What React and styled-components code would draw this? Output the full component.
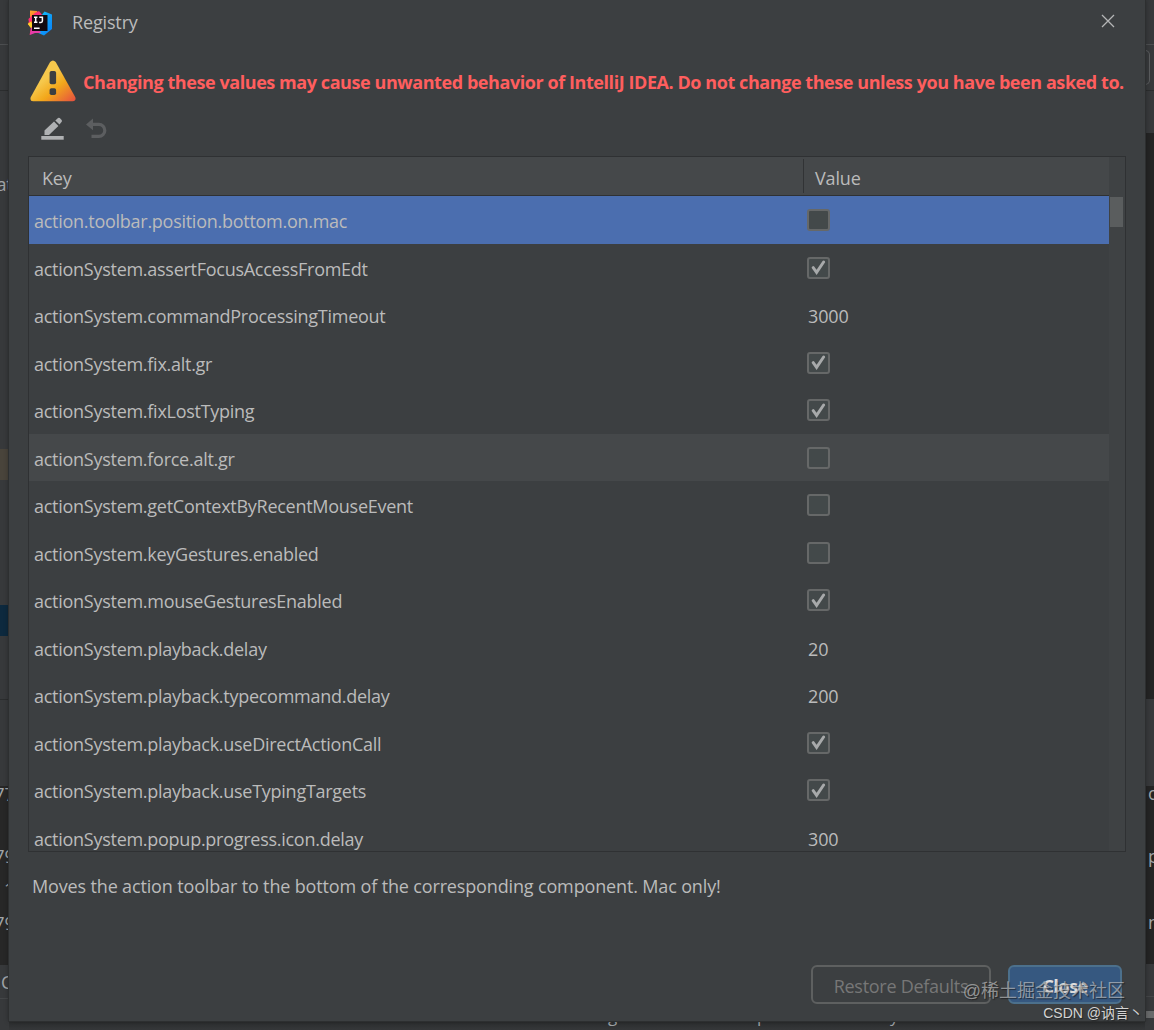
import React, { useState } from "react"
import styled, { createGlobalStyle, css } from "styled-components"

const GlobalStyle = createGlobalStyle`
  * {
    box-sizing: border-box;
  }
  body {
    margin: 0;
    background: #323436;
    font-family: "Open Sans", "Noto Sans", "Noto Sans CJK SC", sans-serif;
    font-size: 18px;
    letter-spacing: -0.15px;
    color: #bbbbbb;
  }
`

const Screen = styled.div`
  position: relative;
  display: grid;
  grid-template-columns: 9px 1136px 9px;
  grid-template-rows: 1021px 9px;
  width: 1154px;
  height: 1030px;
  overflow: hidden;
`

// slices of the editor window that stay visible around the dialog
const Edge = styled.div`
  display: flex;
  flex-direction: column;
  grid-row: 1 / 3;
  overflow: hidden;
  background: #343638;
`

const Strip = styled.div`
  flex: none;
  display: flex;
  align-items: center;
  justify-content: ${p => (p.$center ? "center" : "flex-start")};
  height: ${p => p.$h}px;
  padding-left: ${p => p.$pad || 0}px;
  overflow: hidden;
  white-space: nowrap;
  line-height: 20px;
  color: #a0a4a8;
  background: ${p => p.$bg || "#37393b"};
  ${p =>
    p.$line &&
    css`
      border-bottom: 1px solid ${p.$line};
    `}
`

const FieldEnd = styled.div`
  width: 5px;
  height: 35px;
  border: 1px solid #5a5c5e;
  border-left: 0;
  border-radius: 0 5px 5px 0;
`

const StatusSlice = styled.div`
  grid-column: 2;
  grid-row: 2;
  display: flex;
  align-items: flex-end;
  height: 9px;
  padding-left: 599px;
  overflow: hidden;
  line-height: 19px;
  font-size: 17px;
  color: #a0a4a8;
  background: linear-gradient(#2b2d2e, #353739);
`

const StatusGlyph = styled.span`
  width: ${p => p.$w}px;
  height: 24px;
`

const Dialog = styled.section`
  grid-column: 2;
  grid-row: 1;
  display: flex;
  flex-direction: column;
  background: #3c3f41;
  box-shadow: 0 0 0 1px #2d2f30, 0 0 5px rgba(0, 0, 0, 0.4);
  z-index: 1;
`

const TitleBar = styled.header`
  display: flex;
  align-items: center;
  height: 45px;
  padding: 0 30px 0 18px;
`

const Title = styled.h1`
  flex: 1;
  margin: 0 0 1px 19px;
  font-size: 18px;
  font-weight: 400;
  line-height: 24px;
`

const PlainButton = styled.button`
  display: flex;
  padding: 0;
  border: 0;
  margin-bottom: ${p => p.$lift || 0}px;
  background: none;
`

const Warning = styled.div`
  display: flex;
  align-items: center;
  height: 64px;
  padding: 8px 0 0 20px;
  gap: 6px;
  font-weight: 700;
  letter-spacing: -0.43px;
  color: #ff5e5e;
  white-space: nowrap;

  svg {
    flex: none;
  }
  span {
    padding-top: 2px;
  }
`

const Toolbar = styled.div`
  display: flex;
  align-items: center;
  height: 47px;
  padding: 0 0 8px 32px;
  gap: 21px;
`

const Table = styled.div`
  display: grid;
  grid-template-columns: 1080px 16px;
  width: 1098px;
  height: 696px;
  margin-left: 19px;
  border: 1px solid #2f3133;
`

const TableMain = styled.div`
  height: 694px;
  overflow: hidden;
`

const TableHead = styled.div`
  display: flex;
  height: 39px;
  border-bottom: 1px solid #2f3133;
  background: #45484a;
`

const HeadCell = styled.div`
  display: flex;
  align-items: center;
  width: ${p => p.$w}px;
  height: 34px;
  margin-top: 2px;
  padding: 3px 0 0 ${p => p.$pad}px;
  ${p =>
    p.$divider &&
    css`
      border-right: 1px solid #313335;
    `}
`

const Row = styled.div`
  display: flex;
  align-items: center;
  height: 47.5px;
  background: ${p =>
    p.$selected ? "#4b6eaf" : p.$hovered ? "#45484a" : "transparent"};
`

const KeyCell = styled.div`
  width: 774px;
  padding: 3px 0 0 5px;
  letter-spacing: -0.27px;
`

const ValueCell = styled.div`
  padding: ${p => (p.$text ? "3px 0 0 5px" : "1px 0 0 4px")};
`

const Check = styled.span`
  display: flex;
  align-items: center;
  justify-content: center;
  width: 23px;
  height: 22px;
  border: 2px solid #666868;
  border-radius: 3px;
  background: #43494a;
`

const ScrollTrack = styled.div`
  padding: 40px 2px 0 1px;
  background: #3f4244;
`

const ScrollThumb = styled.div`
  height: 30px;
  background: #5a5d5e;
`

const Description = styled.p`
  height: 113px;
  margin: 0;
  padding: 21px 0 0 23px;
  line-height: 26px;
`

const Footer = styled.footer`
  display: flex;
  justify-content: flex-end;
  gap: 17px;
  padding-right: 23px;
`

const Button = styled.button`
  width: ${p => p.$w}px;
  height: 39px;
  padding: 3px 0 0;
  border: 2px solid ${p => (p.$primary ? "#4c708c" : "#5e6060")};
  border-radius: 6px;
  font: inherit;
  font-weight: ${p => (p.$primary ? 700 : 400)};
  letter-spacing: ${p => (p.$primary ? "-0.5px" : "-0.27px")};
  line-height: 24px;
  color: ${p => (p.$primary ? "#dddddd" : "#777777")};
  background: ${p => (p.$primary ? "#365880" : "transparent")};
`

const Watermark = styled.div`
  position: absolute;
  right: ${p => p.$right}px;
  bottom: ${p => p.$bottom}px;
  z-index: 2;
  font-family: "Liberation Sans", "Noto Sans CJK SC", sans-serif;
  font-size: ${p => p.$size}px;
  letter-spacing: 0;
  line-height: 20px;
  white-space: nowrap;
  color: ${p => p.$color};
  text-shadow: 1px 1px 1px rgba(20, 20, 20, 0.6);
`

const IdeaLogo = () => (
  <svg width="26" height="26" viewBox="0 0 26 26">
    <defs>
      <linearGradient id="ideaLeft" x1="0" y1="0" x2="0.4" y2="1">
        <stop offset="0" stopColor="#fdb32b" />
        <stop offset="0.5" stopColor="#fc6b2d" />
        <stop offset="1" stopColor="#e92b8d" />
      </linearGradient>
      <linearGradient id="ideaRight" x1="0" y1="0" x2="1" y2="1">
        <stop offset="0" stopColor="#16c8f5" />
        <stop offset="1" stopColor="#087cfa" />
      </linearGradient>
    </defs>
    <path d="M3 0.5 10 1 14 8 9 20 2.5 25 4 18 0.8 14 3 10Z" fill="url(#ideaLeft)" />
    <path d="M8 3 12 1 16 6 6 10 2 13 1.4 9Z" fill="#fe2e75" />
    <path d="M14 6 17.5 1.5 25 4.5 25 19 17 25.5 9 22 17 12Z" fill="url(#ideaRight)" />
    <path d="M3 25 4 18 11 18 14 23 8 23Z" fill="#e73ba8" />
    <path d="M0.8 14 4 11.5 6 16 4 18Z" fill="#fdd22b" />
    <rect x="5" y="5" width="15.5" height="16" fill="#120a10" />
    <path
      d="M7 7.2H10.4M8.7 7.2V12.3M7 12.3H10.4M12.3 7.2H15.4V11Q15.4 12.4 14 12.4H12.1M7 18.2H12.6"
      fill="none"
      stroke="#fff"
      strokeWidth="1.5"
    />
  </svg>
)

const WarningIcon = () => (
  <svg width="48" height="42" viewBox="0 0 48 42">
    <defs>
      <linearGradient id="warn" x1="0.2" y1="0.2" x2="0.95" y2="1">
        <stop offset="0.25" stopColor="#f6c84c" />
        <stop offset="0.55" stopColor="#f3a81b" />
        <stop offset="1" stopColor="#e6533e" />
      </linearGradient>
    </defs>
    <path
      d="M21.1 2Q24 -1.2 26.7 2L46.3 37.3Q47.4 41 43.7 41.3H4Q0.6 41 1.7 37.3Z"
      fill="url(#warn)"
    />
    <rect x="20.6" y="11" width="6.5" height="13.2" rx="1.8" fill="#3c3f41" />
    <rect x="20.6" y="28.3" width="6.5" height="6.8" rx="1.8" fill="#3c3f41" />
  </svg>
)

const EditIcon = () => (
  <svg width="24" height="24" viewBox="0 0 24 24" fill="#afb1b3">
    <path d="M3.5 13.6 13 4.6 17.4 9 8 18H3.5Z" />
    <path d="M14.3 3.4 17 0.9Q17.9 0.3 18.8 1.1L20.6 2.9Q21.4 3.8 20.7 4.7L18.5 7.4Z" />
    <rect x="0.3" y="19" width="22.4" height="3.7" />
  </svg>
)

const UndoIcon = () => (
  <svg width="22" height="22" viewBox="0 0 22 22">
    <path d="M0 6.6 7 0.5V12.3Z" fill="#5c5e60" />
    <path
      d="M6 6.4H12.8A6 6 0 0 1 12.8 18.4H5.5"
      fill="none"
      stroke="#5c5e60"
      strokeWidth="3.2"
    />
  </svg>
)

const CloseIcon = () => (
  <svg width="14" height="14" viewBox="0 0 14 14">
    <path d="M1 1 13 13M13 1 1 13" stroke="#b5b6b7" strokeWidth="1.3" />
  </svg>
)

const CheckMark = () => (
  <svg width="15" height="15" viewBox="0 0 15 15">
    <path
      d="M2.2 7.6 5.6 12.4 12.6 2"
      fill="none"
      stroke="#a7a9aa"
      strokeWidth="2.9"
      strokeLinecap="round"
    />
  </svg>
)

const entries = [
  ["action.toolbar.position.bottom.on.mac", false],
  ["actionSystem.assertFocusAccessFromEdt", true],
  ["actionSystem.commandProcessingTimeout", "3000"],
  ["actionSystem.fix.alt.gr", true],
  ["actionSystem.fixLostTyping", true],
  ["actionSystem.force.alt.gr", false],
  ["actionSystem.getContextByRecentMouseEvent", false],
  ["actionSystem.keyGestures.enabled", false],
  ["actionSystem.mouseGesturesEnabled", true],
  ["actionSystem.playback.delay", "20"],
  ["actionSystem.playback.typecommand.delay", "200"],
  ["actionSystem.playback.useDirectActionCall", true],
  ["actionSystem.playback.useTypingTargets", true],
  ["actionSystem.popup.progress.icon.delay", "300"],
]

const RegistryTable = () => {
  const [selected, setSelected] = useState(0)

  return (
    <Table>
      <TableMain>
        <TableHead>
          <HeadCell $w={775} $pad={13} $divider>
            Key
          </HeadCell>
          <HeadCell $w={305} $pad={11}>
            Value
          </HeadCell>
        </TableHead>
        {entries.map(([name, value], i) => (
          <Row
            key={name}
            $selected={i === selected}
            $hovered={i === 5}
            onClick={() => setSelected(i)}
          >
            <KeyCell>{name}</KeyCell>
            <ValueCell $text={typeof value === "string"}>
              {typeof value === "string" ? (
                value
              ) : (
                <Check>{value && <CheckMark />}</Check>
              )}
            </ValueCell>
          </Row>
        ))}
      </TableMain>
      <ScrollTrack>
        <ScrollThumb />
      </ScrollTrack>
    </Table>
  )
}

const LeftEdge = () => (
  <Edge>
    <Strip $h={45} $line="#4c4e50" />
    <Strip $h={46} $line="#2b2d2e" />
    <Strip $h={186} $center>
      at
    </Strip>
    <Strip $h={172} />
    <Strip $h={31} $bg="#49443b" />
    <Strip $h={125} />
    <Strip $h={31} $bg="#0d293e" />
    <Strip $h={64} $line="#2b2d2e" />
    <Strip $h={86} />
    <Strip $h={16} $bg="#272727" $center>
      77
    </Strip>
    <Strip $h={44} $bg="#272727" />
    <Strip $h={20} $bg="#272727" $center>
      79
    </Strip>
    <Strip $h={13} $bg="#272727" />
    <Strip $h={20} $bg="#272727" $pad={4}>
      1
    </Strip>
    <Strip $h={14} $bg="#272727" />
    <Strip $h={20} $bg="#272727" $center>
      79
    </Strip>
    <Strip $h={32} $bg="#272727" />
    <Strip $h={34} $line="#444648" $pad={1}>
      C
    </Strip>
    <Strip $h={31} />
  </Edge>
)

const RightEdge = () => (
  <Edge>
    <Strip $h={45} $line="#4c4e50" />
    <Strip $h={46} $line="#2b2d2e">
      <FieldEnd />
    </Strip>
    <Strip $h={42} />
    <Strip $h={566} $bg="#242424" />
    <Strip $h={87} />
    <Strip $h={14} $bg="#242424" $pad={3}>
      o
    </Strip>
    <Strip $h={112} $bg="#242424" $pad={3}>
      p
    </Strip>
    <Strip $h={20} $bg="#242424" $pad={3}>
      n
    </Strip>
    <Strip $h={32} $bg="#242424" />
    <Strip $h={33} $line="#444648" />
    <Strip $h={14} />
    <Strip $h={7} $bg="#686a6b" />
    <Strip $h={12} />
  </Edge>
)

const App = () => (
  <>
    <GlobalStyle />
    <Screen>
      <LeftEdge />
      <Dialog>
        <TitleBar>
          <IdeaLogo />
          <Title>Registry</Title>
          <PlainButton $lift={3} aria-label="Close dialog">
            <CloseIcon />
          </PlainButton>
        </TitleBar>
        <Warning>
          <WarningIcon />
          <span>
            Changing these values may cause unwanted behavior of IntelliJ IDEA.
            Do not change these unless you have been asked to.
          </span>
        </Warning>
        <Toolbar>
          <PlainButton aria-label="Edit">
            <EditIcon />
          </PlainButton>
          <PlainButton aria-label="Revert">
            <UndoIcon />
          </PlainButton>
        </Toolbar>
        <RegistryTable />
        <Description>
          Moves the action toolbar to the bottom of the corresponding
          component. Mac only!
        </Description>
        <Footer>
          <Button $w={180}>Restore Defaults</Button>
          <Button $w={114} $primary>
            Close
          </Button>
        </Footer>
      </Dialog>
      <StatusSlice>
        <StatusGlyph $w={149}>g</StatusGlyph>
        <StatusGlyph $w={133}>p</StatusGlyph>
        <StatusGlyph $w={8}>y</StatusGlyph>
      </StatusSlice>
      <RightEdge />
      <Watermark $right={29} $bottom={29} $size={18} $color="rgba(200, 200, 200, 0.65)">
        @稀土掘金技术社区
      </Watermark>
      <Watermark $right={11} $bottom={7} $size={14} $color="#d4d4d4">
        CSDN @讷言丶
      </Watermark>
    </Screen>
  </>
)

export default App
